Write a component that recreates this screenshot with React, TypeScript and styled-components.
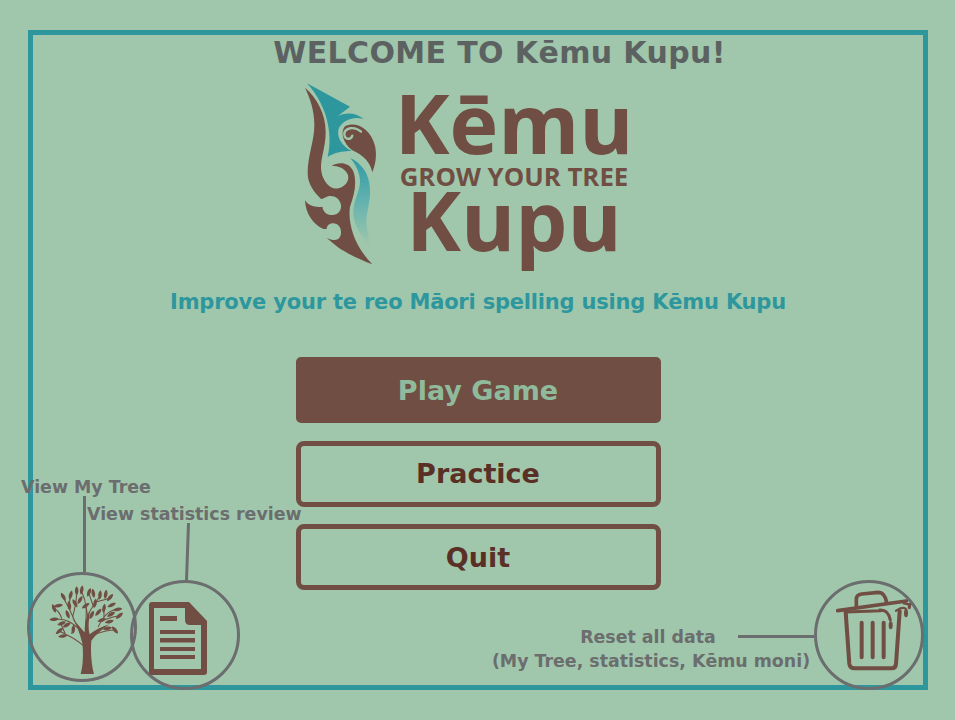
import React from 'react';
import styled, { createGlobalStyle } from 'styled-components';

const BG = '#a0c7ab';
const TEAL = '#2e979e';
const BROWN = '#714e43';
const GREY = '#6b6d6e';

const GlobalStyle = createGlobalStyle`
  html, body {
    margin: 0;
    height: 100%;
    background: ${BG};
    overflow: hidden;
    font-family: 'DejaVu Sans', sans-serif;
  }
`;

const Frame = styled.main`
  position: relative;
  box-sizing: border-box;
  width: 900px;
  height: 660px;
  margin: 30px 0 0 28px;
  border: 5px solid ${TEAL};
  display: flex;
  flex-direction: column;
  align-items: center;
`;

const Title = styled.h1`
  margin: 0 0 0 43px;
  font-size: 30px;
  line-height: 36px;
  font-weight: 700;
  letter-spacing: 0.38px;
  color: #5c6262;
  white-space: nowrap;
`;

const Logo = styled.div`
  display: flex;
  align-items: flex-start;
  margin: 4px 0 0 -31px;
  height: 200px;
`;

const LogoWords = styled.div`
  display: flex;
  flex-direction: column;
  align-items: center;
  margin-left: 13px;
  width: 232px;
  padding-top: 8px;
  font-family: 'Open Sans', sans-serif;
  font-weight: 700;
  color: ${BROWN};
`;

const LogoBig = styled.span`
  font-size: 82.5px;
  line-height: 78px;
  white-space: nowrap;
`;

const LogoSmall = styled.span`
  margin: 5px 0 -6px;
  font-size: 25.8px;
  line-height: 20px;
  white-space: nowrap;
`;

const Subtitle = styled.p`
  margin: 13px 0 0;
  font-size: 21px;
  line-height: 28px;
  font-weight: 700;
  letter-spacing: -0.2px;
  color: ${TEAL};
  white-space: nowrap;
`;

const Menu = styled.nav`
  display: flex;
  flex-direction: column;
  gap: 17.5px;
  margin-top: 41px;
`;

const MenuButton = styled.button<{ $solid?: boolean }>`
  box-sizing: border-box;
  width: 365px;
  height: 66px;
  padding: 0;
  border: 5px solid ${BROWN};
  border-radius: ${p => (p.$solid ? 5 : 8)}px;
  background: ${p => (p.$solid ? BROWN : 'transparent')};
  color: ${p => (p.$solid ? '#8fbb9c' : '#5a3026')};
  font-family: 'DejaVu Sans', sans-serif;
  font-size: 27px;
  font-weight: 700;
`;

const Ring = styled.button<{ $left?: number; $right?: number; $top: number }>`
  position: absolute;
  box-sizing: border-box;
  top: ${p => p.$top}px;
  ${p => (p.$left !== undefined ? `left: ${p.$left}px;` : '')}
  ${p => (p.$right !== undefined ? `right: ${p.$right}px;` : '')}
  width: 110px;
  height: 110px;
  padding: 0;
  border: 3px solid ${GREY};
  border-radius: 50%;
  background: transparent;
  display: flex;
  align-items: center;
  justify-content: center;
`;

const Hint = styled.span<{ $left: number; $top: number }>`
  position: absolute;
  left: ${p => p.$left}px;
  top: ${p => p.$top}px;
  font-size: 17.4px;
  line-height: 20px;
  font-weight: 700;
  color: ${GREY};
  white-space: nowrap;
`;

const ResetHint = styled.div`
  position: absolute;
  left: 448px;
  top: 590px;
  width: 340px;
  font-size: 17.4px;
  line-height: 24px;
  font-weight: 700;
  color: ${GREY};
  text-align: center;
  white-space: nowrap;
`;

const ResetFirstLine = styled.span`
  display: block;
  padding-right: 6px;
`;

const Leader = styled.i<{ $left: number; $top: number; $w: number; $h: number; $tilt?: number }>`
  position: absolute;
  left: ${p => p.$left}px;
  top: ${p => p.$top}px;
  width: ${p => p.$w}px;
  height: ${p => p.$h}px;
  background: ${GREY};
  transform: rotate(${p => p.$tilt ?? 0}deg);
`;

const LogoMark = () => (
  <svg width="90" height="200" viewBox="0 0 270 600" style={{ flex: 'none' }}>
    <defs>
      <linearGradient id="fade" x1="0" y1="0" x2="0" y2="1">
        <stop offset="0" stopColor="#2f9aa4" />
        <stop offset="0.45" stopColor="#5eb0ae" />
        <stop offset="1" stopColor={BG} />
      </linearGradient>
    </defs>
    <path
      fill={BROWN}
      d="M30 38 C65 68 92 115 92 170 C92 215 78 245 78 275 C78 315 105 345 130 340 C152 335 165 315 158 298 C150 280 130 272 110 272 C130 260 165 260 176 292 C186 325 178 360 165 395 C158 440 175 510 232 568 C190 552 150 532 128 516 C115 505 105 498 95 488 C110 496 125 498 132 490 C142 478 140 455 125 447 C110 440 95 448 95 462 L85 462 C55 448 32 418 30 376 C40 392 60 398 82 395 C85 415 100 420 112 420 C130 420 140 405 138 390 C135 370 115 360 100 364 C90 367 85 372 78 372 C55 350 38 325 38 295 C38 240 58 200 58 150 C58 105 45 70 30 38 Z"
    />
    <path
      fill={TEAL}
      d="M36 25 L165 95 L126 125 C150 110 185 112 206 132 C175 124 148 134 132 158 C122 182 140 214 170 228 C140 228 115 234 98 246 C112 190 104 100 36 25 Z"
    />
    <path
      fill={BROWN}
      d="M150 154 C178 138 225 155 240 212 C247 245 240 270 232 292 C226 262 205 240 172 226 C146 208 134 172 150 154 Z"
    />
    <path fill="none" stroke={BG} strokeWidth="7" strokeLinecap="round" d="M198 170 C178 152 148 158 148 178 C148 194 168 196 172 182" />
    <path
      fill="url(#fade)"
      d="M165 248 C200 265 222 295 225 340 C228 385 210 420 215 450 C218 475 222 490 225 512 C205 492 180 460 175 420 C172 380 195 350 195 320 C195 290 180 265 165 248 Z"
    />
  </svg>
);

const leaves: [number, number, number][] = [
  [100, 65, -30], [122, 60, 15], [140, 48, 0], [155, 45, 10], [177, 52, 20], [190, 55, -10], [210, 60, 5],
  [227, 58, 10], [240, 68, 40], [245, 90, 65], [263, 103, 80], [268, 122, 50], [255, 165, -40], [232, 160, 80],
  [72, 100, -20], [72, 133, 85], [95, 145, 70], [88, 168, 50], [98, 183, 80], [113, 118, -20], [130, 163, 5],
  [167, 92, 55], [195, 85, 10], [222, 100, 10], [243, 118, 60], [85, 92, 80], [135, 85, -30], [215, 135, 70],
  [150, 75, 30], [205, 112, 40], [118, 92, -10], [238, 140, 75], [110, 150, 60], [185, 120, 25],
];

const TreeIcon = () => (
  <svg width="104" height="104" viewBox="0 0 312 312">
    <path fill={BROWN} d="M152 297 C160 270 160 230 157 205 C150 175 140 150 126 128 C145 150 158 165 164 172 C165 150 165 130 180 108 C176 135 174 160 179 178 C195 165 215 155 238 148 C215 165 197 178 184 197 C181 230 185 270 192 297 Z" />
    <g fill="none" stroke={BROWN} strokeWidth="3.2" strokeLinecap="round">
      <path d="M160 212 C135 188 110 180 92 170" />
      <path d="M150 165 C125 140 105 130 78 133" />
      <path d="M135 140 C125 115 115 95 100 68" />
      <path d="M128 125 C135 100 140 80 140 52" />
      <path d="M115 100 L122 62" />
      <path d="M166 160 C168 125 175 90 155 50" />
      <path d="M176 115 C190 90 200 80 210 62" />
      <path d="M190 95 L177 55" />
      <path d="M200 80 C220 75 232 72 240 68" />
      <path d="M205 155 C215 130 235 105 262 103" />
      <path d="M212 140 C230 130 250 125 268 122" />
      <path d="M190 180 C215 170 235 165 255 165" />
      <path d="M95 130 C90 115 82 105 72 100" />
      <path d="M125 175 L130 160 M105 175 L92 145 M175 135 L168 95 M222 125 L222 100" />
    </g>
    {leaves.map(([x, y, a]) => (
      <path
        key={`${x}-${y}`}
        fill={BROWN}
        d="M0 -14 C7 -7 7 6 0 14 C-7 6 -7 -7 0 -14 Z"
        transform={`translate(${x} ${y}) rotate(${a})`}
      />
    ))}
  </svg>
);

const DocIcon = () => (
  <svg width="104" height="104" viewBox="-16 -19 104 104">
    <path fill={BROWN} d="M3 0 H40 L58 19 V70 Q58 73 55 73 H3 Q0 73 0 70 V3 Q0 0 3 0 Z" />
    <path fill={BG} d="M5 6 H36 V18 Q36 23 41 23 H52 V67 H5 Z" />
    <rect x="11" y="14" width="17" height="5" fill={BROWN} />
    <rect x="11" y="28" width="35" height="4" fill={BROWN} />
    <rect x="11" y="36" width="35" height="4.5" fill={BROWN} />
    <rect x="11" y="45" width="35" height="4" fill={BROWN} />
    <rect x="11" y="53" width="35" height="4" fill={BROWN} />
  </svg>
);

const TrashIcon = () => (
  <svg width="104" height="104" viewBox="108 39 312 312">
    <g fill="none" stroke={BROWN} strokeLinecap="round" strokeLinejoin="round">
      <path strokeWidth="11" d="M170 122 L376 93" />
      <path strokeWidth="11" d="M226 108 V88 Q226 74 242 72 L292 67 Q312 67 317 98" />
      <path strokeWidth="12" d="M194 126 L205 282 Q207 295 220 295 H332 Q344 295 345 282 L356 124" />
      <path strokeWidth="9" d="M194 126 L300 122 M296 120 Q322 118 328 150" />
      <path strokeWidth="12" d="M242 158 V262 M275 158 V262 M308 158 V262" />
      <path strokeWidth="7" d="M345 122 L356 116 Q372 110 376 120" />
      <path strokeWidth="7" d="M368 100 L388 104" />
    </g>
    <ellipse cx="329" cy="166" rx="6" ry="12" fill={BROWN} />
    <ellipse cx="375" cy="130" rx="6" ry="12" fill={BROWN} />
    <ellipse cx="385" cy="108" rx="5" ry="10" fill={BROWN} />
  </svg>
);

const App = () => (
  <>
    <GlobalStyle />
    <Frame>
      <Title>WELCOME TO Kēmu Kupu!</Title>
      <Logo>
        <LogoMark />
        <LogoWords>
          <LogoBig>Kēmu</LogoBig>
          <LogoSmall>GROW YOUR TREE</LogoSmall>
          <LogoBig>Kupu</LogoBig>
        </LogoWords>
      </Logo>
      <Subtitle>Improve your te reo Māori spelling using Kēmu Kupu</Subtitle>
      <Menu>
        <MenuButton $solid>Play Game</MenuButton>
        <MenuButton>Practice</MenuButton>
        <MenuButton>Quit</MenuButton>
      </Menu>

      <Hint $left={-12} $top={442}>View My Tree</Hint>
      <Leader $left={50} $top={461} $w={3} $h={76} />
      <Hint $left={54} $top={469}>View statistics review</Hint>
      <Leader $left={153} $top={488} $w={3} $h={58} $tilt={2} />
      <Ring $left={-6} $top={537} aria-label="View My Tree"><TreeIcon /></Ring>
      <Ring $left={97} $top={545} aria-label="View statistics review"><DocIcon /></Ring>

      <ResetHint>
        <ResetFirstLine>Reset all data</ResetFirstLine>
        (My Tree, statistics, Kēmu moni)
      </ResetHint>
      <Leader $left={705} $top={600} $w={76} $h={3} />
      <Ring $right={-1} $top={545} aria-label="Reset all data"><TrashIcon /></Ring>
    </Frame>
  </>
);

export default App;
